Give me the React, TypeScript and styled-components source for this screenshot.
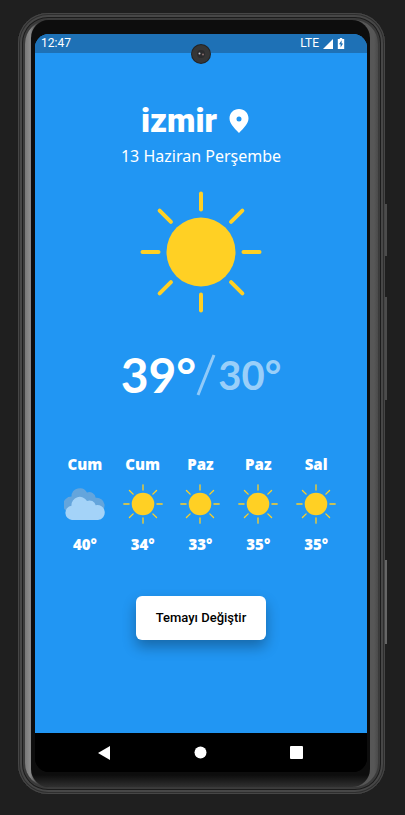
import React from "react";
import styled, { createGlobalStyle } from "styled-components";

const GlobalStyle = createGlobalStyle`
  * { box-sizing: border-box; }
  body { margin: 0; background: #1f1f1f; }
`;

const Page = styled.div`
  display: flex;
  min-height: 100vh;
  padding: 13px 20px 21px 18px;
  background: #1f1f1f;
`;

const Phone = styled.div`
  position: relative;
  display: flex;
  flex: 1;
  padding: 7px;
  border-radius: 30px;
  background: #3a3a3a;
  box-shadow:
    inset 0 0 0 1px #464646,
    inset 0 0 0 2px #2e2e2e,
    inset 0 0 0 4px #474747,
    inset 0 0 0 5px #1c1c1c,
    inset 0 0 0 6px #3c3c3c;
`;

const SideKey = styled.span<{ $top: number; $length: number; $color: string }>`
  position: absolute;
  left: 100%;
  top: ${(p) => p.$top}px;
  width: 2px;
  height: ${(p) => p.$length}px;
  background: ${(p) => p.$color};
`;

const Metal = styled.div`
  display: flex;
  flex: 1;
  padding: 0 8px 0 6px;
  border-radius: 24px;
  background: linear-gradient(90deg, #777 0, #8a8a8a 5px, #444 12px, #111 24px, #111 50%, #575757 calc(100% - 12px), #575757 calc(100% - 4px), #4a4a4a 100%);
`;

const Bezel = styled.div`
  display: flex;
  flex: 1;
  padding: 14px 3px 15px 4px;
  border-radius: 18px;
  background: linear-gradient(180deg, #0d0d0d 0, #0d0d0d calc(100% - 12px), #303030 100%);
`;

const Screen = styled.div`
  position: relative;
  display: flex;
  flex: 1;
  flex-direction: column;
  overflow: hidden;
  border-radius: 14px;
  background: linear-gradient(#2196f3 50%, #000 50%);
  color: #fff;
`;

const StatusBar = styled.header`
  display: flex;
  align-items: center;
  justify-content: space-between;
  height: 19px;
  padding: 0 22px 0 6px;
  background: #1e71b6;
  font: 400 12px/19px Roboto, sans-serif;
`;

const Signals = styled.div`
  display: flex;
  align-items: center;
  gap: 4px;
`;

const Camera = styled.div`
  position: absolute;
  top: 10px;
  left: 50%;
  width: 20px;
  height: 20px;
  transform: translateX(-50%);
`;

const Weather = styled.main`
  display: flex;
  flex: 1;
  flex-direction: column;
  align-items: center;
  padding-top: 48px;
  background: #2196f3;
`;

const Place = styled.div`
  display: flex;
  align-items: center;
  gap: 12px;
  padding-right: 12px;
`;

const City = styled.h1`
  margin: 0;
  font: 900 33px/40px Roboto, sans-serif;
`;

const Today = styled.p`
  margin: 3px 0 23px;
  font: 400 16px/24px "Noto Sans", sans-serif;
`;

const Temperatures = styled.div`
  display: flex;
  align-items: center;
  height: 56px;
  margin: 34px 0 51px;
  font-family: Lato, sans-serif;
  line-height: 56px;
  white-space: nowrap;
`;

const High = styled.strong`
  font-size: 48px;
  font-weight: 700;
`;

const Low = styled.span`
  margin-left: 2px;
  font-size: 40px;
  font-weight: 700;
  color: #99cff9;
`;

const Week = styled.ul`
  display: grid;
  grid-template-columns: repeat(5, 1fr);
  width: 100%;
  margin: 0;
  padding: 0 22px 0 21px;
  list-style: none;
`;

const Day = styled.li`
  display: flex;
  flex-direction: column;
  align-items: center;
  gap: 10px;
  font: 900 15px/20px "Noto Sans", sans-serif;
`;

const ThemeButton = styled.button`
  height: 44px;
  margin-top: 42px;
  padding: 0 20px;
  border: 0;
  border-radius: 6px;
  background: #fff;
  color: #000;
  font: 500 13px/20px Roboto, sans-serif;
  box-shadow: 0 7px 14px rgba(0, 0, 0, 0.3);
  cursor: pointer;
`;

const NavBar = styled.nav`
  display: flex;
  align-items: center;
  justify-content: space-between;
  height: 39px;
  padding: 0 64px 0 63px;
  background: #000;
`;

const NavButton = styled.button`
  display: flex;
  padding: 0;
  border: 0;
  background: none;
  color: #fff;
`;

const rays = [0, 45, 90, 135, 180, 225, 270, 315];

const Sun = ({ size }: { size: number }) => (
  <svg width={size} height={size} viewBox="0 0 122 122" aria-hidden="true">
    <circle cx="61" cy="61" r="34.5" fill="#ffd024" />
    {rays.map((angle) => (
      <line key={angle} x1="61" y1="2.5" x2="61" y2="18.5" stroke="#ffd024" strokeWidth="4" strokeLinecap="round" transform={`rotate(${angle} 61 61)`} />
    ))}
  </svg>
);

const Cloud = () => (
  <svg width="42" height="40" viewBox="0 0 42 40" aria-hidden="true">
    <path d="M7.500 29a7 7 0 0 1 0-16.500A8.300 8.300 0 0 1 23 8.500a6.500 6.500 0 0 1 8.700 5.300A7.500 7.500 0 1 1 34 29z" fill="#64a5dc" />
    <path d="M8 36a7.200 7.200 0 0 1-.5-14.300A8.300 8.300 0 0 1 23 17a6.300 6.300 0 0 1 8.700 4.200A7.500 7.500 0 1 1 34 36z" fill="#a4d3f8" />
  </svg>
);

const Pin = () => (
  <svg width="20" height="24" viewBox="0 0 20 24" aria-hidden="true">
    <path fill="#fff" fillRule="evenodd" d="M10 0C4.500 0 .5 4.100.5 9.300c0 5.100 4.300 9.400 9.500 14.700 5.200-5.300 9.500-9.600 9.500-14.700C19.500 4.100 15.500 0 10 0zm0 7.500a2.500 2.500 0 1 1 0 5 2.500 2.500 0 0 1 0-5z" />
  </svg>
);

const forecast = [
  { day: "Cum", temp: "40°", cloudy: true },
  { day: "Cum", temp: "34°", cloudy: false },
  { day: "Paz", temp: "33°", cloudy: false },
  { day: "Paz", temp: "35°", cloudy: false },
  { day: "Sal", temp: "35°", cloudy: false },
];

export default function App() {
  return (
    <Page>
      <GlobalStyle />
      <Phone>
        <SideKey $top={191} $length={52} $color="#4c4c4c" />
        <SideKey $top={284} $length={103} $color="#4c4c4c" />
        <SideKey $top={547} $length={84} $color="#666" />
        <Metal>
          <Bezel>
            <Screen>
              <StatusBar>
                <span>12:47</span>
                <Signals>
                  <span>LTE</span>
                  <svg width="10" height="10" viewBox="0 0 10 10" aria-hidden="true">
                    <path d="M10 0v10H0z" fill="#fff" />
                  </svg>
                  <svg width="8" height="11" viewBox="0 0 8 11" aria-hidden="true">
                    <path d="M2.800 0h2.400v1h2v10H.8V1h2z" fill="#fff" />
                    <path d="M4.600 2.300 2 6.200h1.600v3.200l2.500-4H4.600z" fill="#1e71b6" />
                  </svg>
                </Signals>
              </StatusBar>
              <Weather>
                <Place>
                  <City>izmir</City>
                  <Pin />
                </Place>
                <Today>13 Haziran Perşembe</Today>
                <Sun size={122} />
                <Temperatures>
                  <High>39°</High>
                  <svg width="20" height="42" viewBox="0 0 20 42" aria-hidden="true">
                    <path d="M2 41 18 1" stroke="#90caf9" strokeWidth="3" />
                  </svg>
                  <Low>30°</Low>
                </Temperatures>
                <Week>
                  {forecast.map((item, index) => (
                    <Day key={index}>
                      <span>{item.day}</span>
                      {item.cloudy ? <Cloud /> : <Sun size={40} />}
                      <span>{item.temp}</span>
                    </Day>
                  ))}
                </Week>
                <ThemeButton type="button">Temayı Değiştir</ThemeButton>
              </Weather>
              <NavBar>
                <NavButton type="button" aria-label="Geri">
                  <svg width="13" height="14" viewBox="0 0 13 14"><path d="M12 0v14L0 7z" fill="currentColor" /></svg>
                </NavButton>
                <NavButton type="button" aria-label="Ana ekran">
                  <svg width="13" height="13" viewBox="0 0 13 13"><circle cx="6.500" cy="6.500" r="6" fill="currentColor" /></svg>
                </NavButton>
                <NavButton type="button" aria-label="Son uygulamalar">
                  <svg width="13" height="13" viewBox="0 0 13 13"><rect width="13" height="13" rx="1" fill="currentColor" /></svg>
                </NavButton>
              </NavBar>
              <Camera>
                <svg width="20" height="20" viewBox="0 0 20 20" aria-hidden="true">
                  <circle cx="10" cy="10" r="10" fill="#222" />
                  <circle cx="10" cy="10" r="9" fill="#363636" />
                  <circle cx="10" cy="10" r="4" fill="#2b2b2d" />
                  <circle cx="8.500" cy="9.500" r="1" fill="#c4c4cc" />
                  <circle cx="12" cy="10.500" r="1" fill="#8a6f6f" />
                </svg>
              </Camera>
            </Screen>
          </Bezel>
        </Metal>
      </Phone>
    </Page>
  );
}
